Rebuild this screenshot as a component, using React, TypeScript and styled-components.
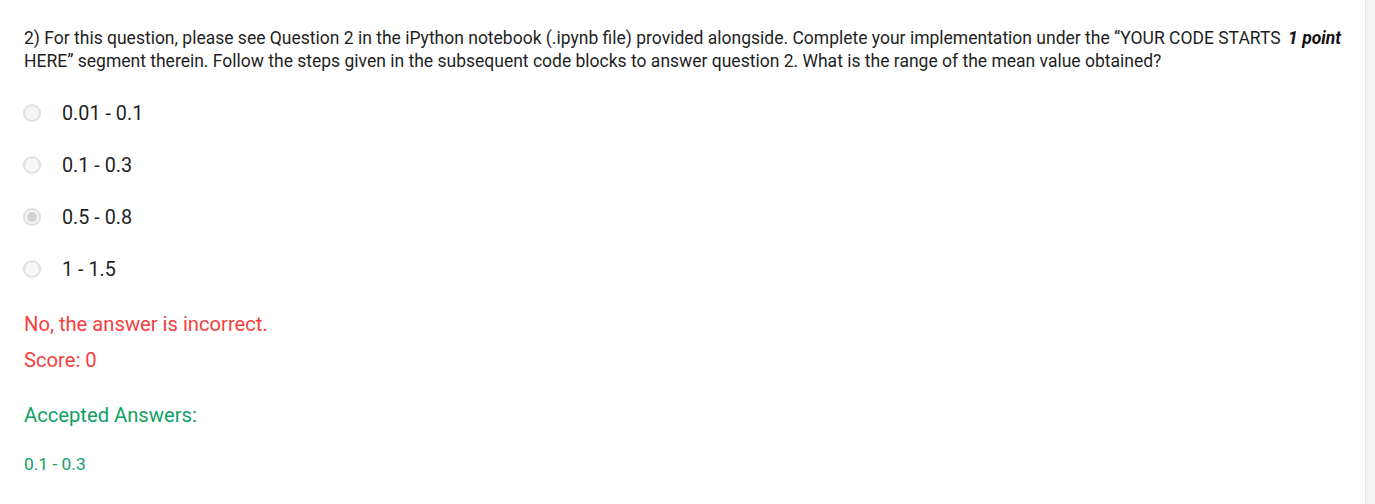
import styled, { createGlobalStyle } from 'styled-components';

const GlobalStyle = createGlobalStyle`
  html, body {
    margin: 0;
    padding: 0;
    background: #f4f4f6;
  }
  body {
    font-family: 'Roboto', 'Liberation Sans', sans-serif;
    color: #222;
  }
`;

const Page = styled.div`
  display: flex;
  height: 504px;
  overflow: hidden;
`;

const Main = styled.div`
  width: 1366px;
  flex-shrink: 0;
  background: #fff;
  border-right: 1px solid #e4e4ea;
  box-sizing: border-box;
  padding: 27px 24px 0 24px;
`;

const QuestionRow = styled.div`
  display: flex;
  align-items: flex-start;
  gap: 7px;
`;

const QuestionText = styled.div`
  flex: 1;
  font-size: 17.5px;
  line-height: 23px;
  color: #1f1f1f;
`;

const Points = styled.div`
  font-size: 17.5px;
  line-height: 23px;
  font-weight: 700;
  font-style: italic;
  white-space: nowrap;
  color: #111;
`;

const Options = styled.div`
  display: flex;
  flex-direction: column;
  margin-top: 14px;
`;

const OptionRow = styled.label`
  display: flex;
  align-items: center;
  height: 52px;
  gap: 21px;
  font-size: 19.8px;
  color: #1f1f1f;
`;

const Radio = styled.span<{ $checked?: boolean }>`
  position: relative;
  width: 18px;
  height: 18px;
  margin-left: -1px;
  border-radius: 50%;
  border: 2px solid #e0e0e0;
  background: #f7f7f7;
  box-sizing: border-box;
  &::after {
    content: '';
    display: ${({ $checked }) => ($checked ? 'block' : 'none')};
    position: absolute;
    top: 2px;
    left: 2px;
    width: 10px;
    height: 10px;
    border-radius: 50%;
    background: #d2d2d2;
  }
`;

const Feedback = styled.div<{ $tone: 'bad' | 'good' }>`
  font-size: 20.2px;
  line-height: 24px;
  color: ${({ $tone }) => ($tone === 'bad' ? '#f43f3f' : '#10a064')};
`;

const FeedbackBlock = styled.div`
  display: flex;
  flex-direction: column;
  gap: 12px;
  margin-top: 17px;
`;

const AcceptedBlock = styled.div`
  margin-top: 31px;
`;

const AcceptedValue = styled.div`
  margin-top: 27px;
  font-size: 17.4px;
  color: #10a064;
`;

const Side = styled.div`
  flex: 1;
  background: #f4f4f6;
`;

const options = [
  { label: '0.01 - 0.1', checked: false },
  { label: '0.1 - 0.3', checked: false },
  { label: '0.5 - 0.8', checked: true },
  { label: '1 - 1.5', checked: false }
];

export default function App() {
  return (
    <>
      <GlobalStyle />
      <Page>
        <Main>
          <QuestionRow>
            <QuestionText>
              2) For this question, please see Question 2 in the iPython notebook (.ipynb file) provided alongside. Complete your
              implementation under the “YOUR CODE STARTS HERE” segment therein. Follow the steps given in the subsequent code
              blocks to answer question 2. What is the range of the mean value obtained?
            </QuestionText>
            <Points>1 point</Points>
          </QuestionRow>
          <Options>
            {options.map((o) => (
              <OptionRow key={o.label}>
                <Radio $checked={o.checked} />
                {o.label}
              </OptionRow>
            ))}
          </Options>
          <FeedbackBlock>
            <Feedback $tone="bad">No, the answer is incorrect.</Feedback>
            <Feedback $tone="bad">Score: 0</Feedback>
          </FeedbackBlock>
          <AcceptedBlock>
            <Feedback $tone="good">Accepted Answers:</Feedback>
            <AcceptedValue>0.1 - 0.3</AcceptedValue>
          </AcceptedBlock>
        </Main>
        <Side />
      </Page>
    </>
  );
}
